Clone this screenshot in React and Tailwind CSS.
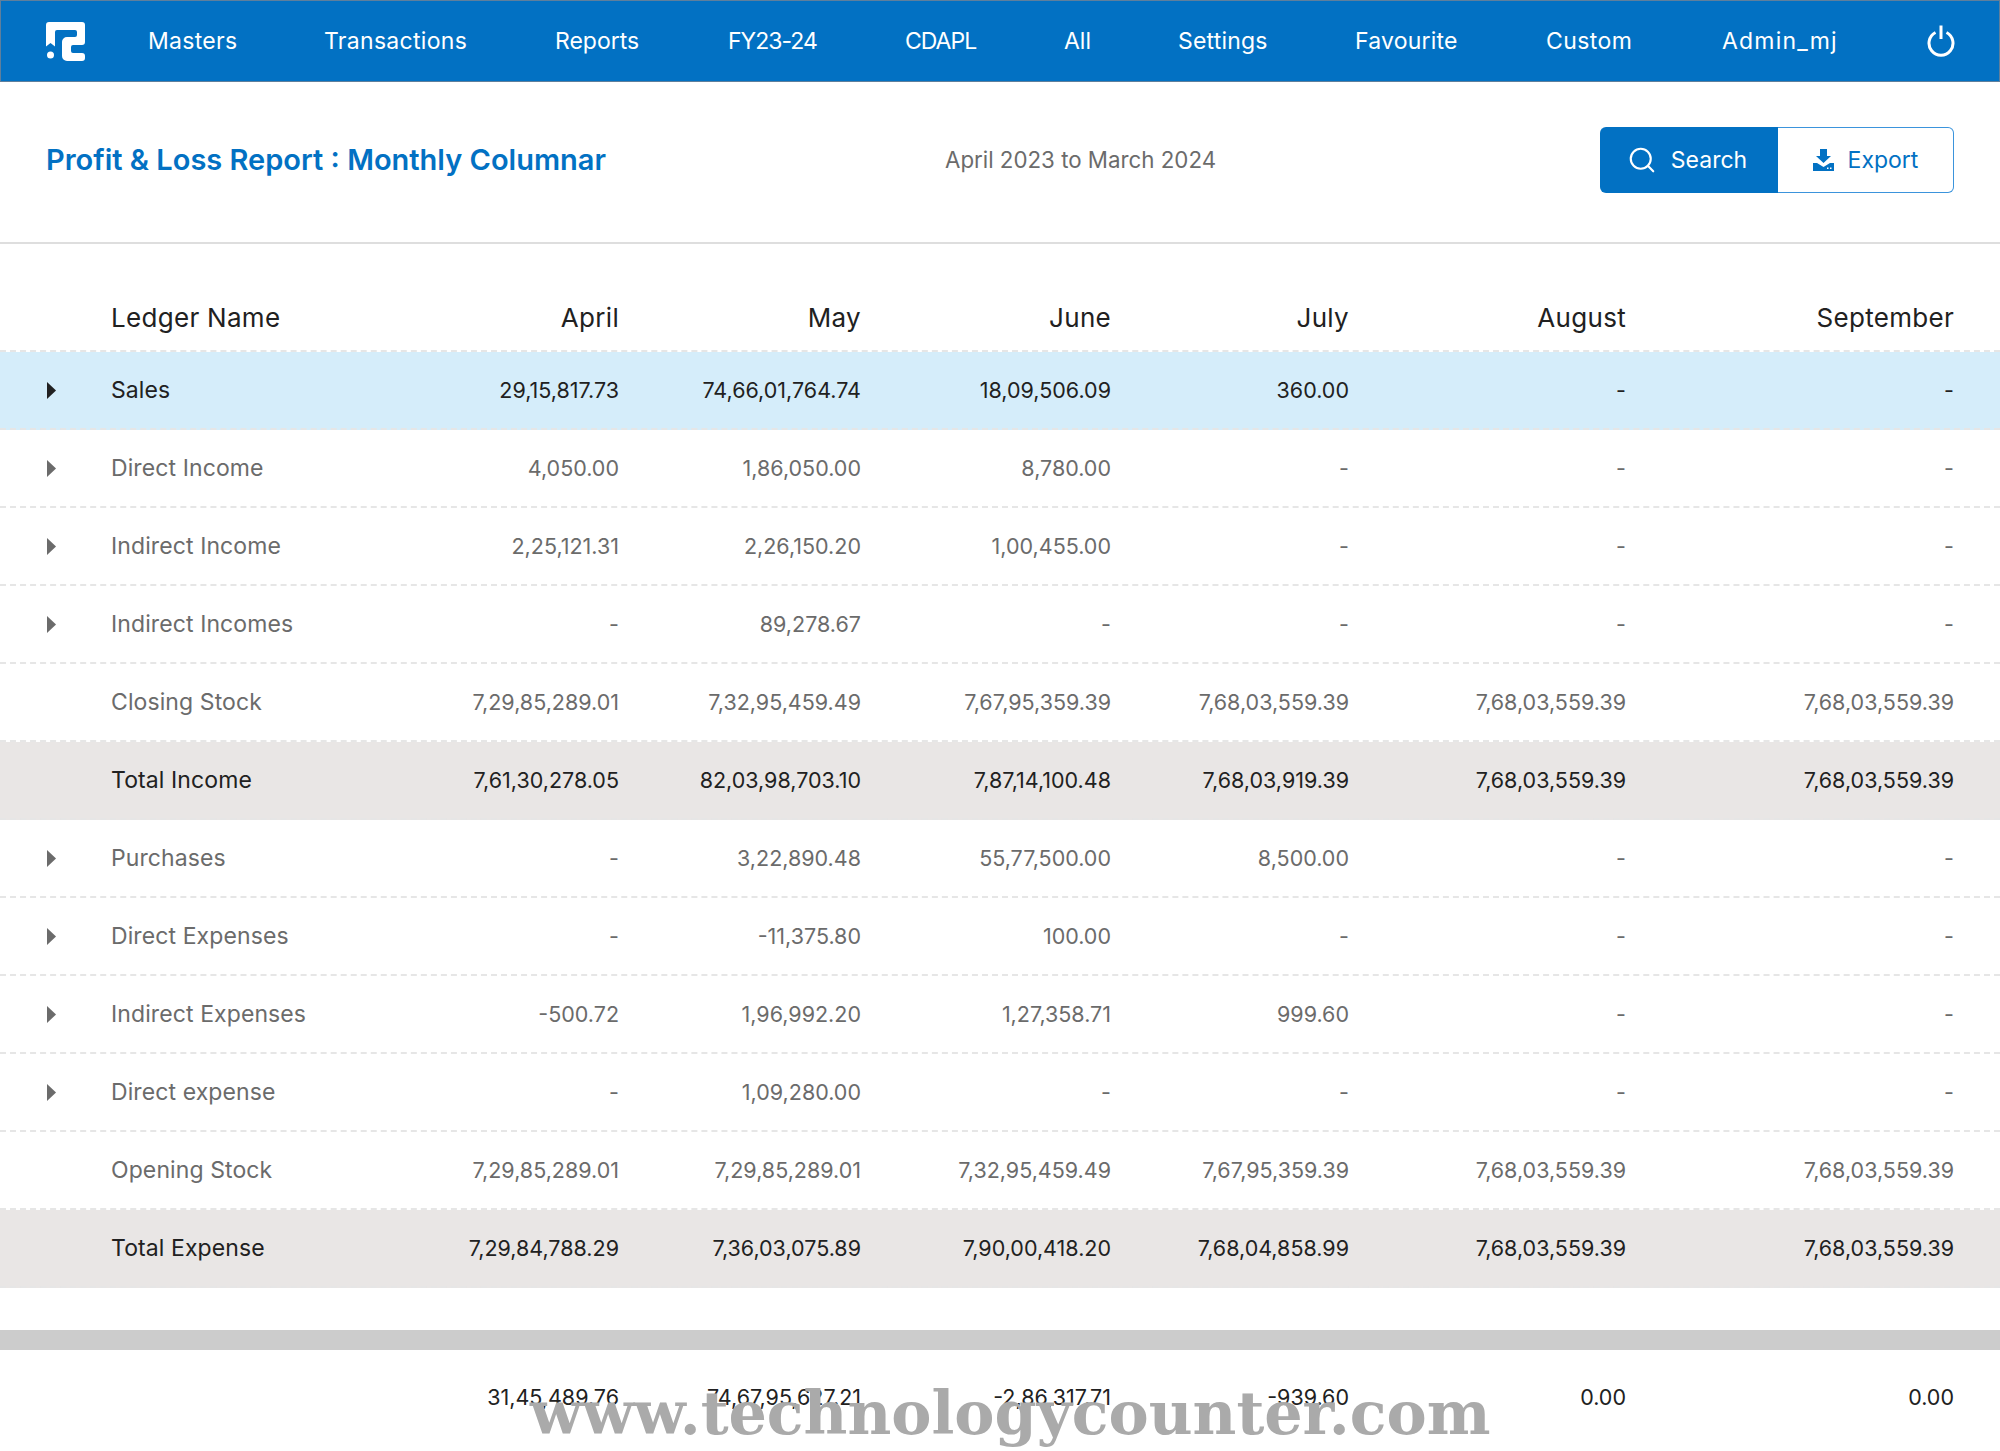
import React from "react";
import { Search } from "lucide-react";

const navItems = [
  { label: "Masters", tracking: "tracking-[0.3px]" },
  { label: "Transactions", tracking: "tracking-[0.3px]" },
  { label: "Reports", tracking: "tracking-[0px]" },
  { label: "FY23-24", tracking: "tracking-[-1px]" },
  { label: "CDAPL", tracking: "tracking-[-1px]" },
  { label: "All", tracking: "tracking-[0px]" },
  { label: "Settings", tracking: "tracking-[0.2px]" },
  { label: "Favourite", tracking: "tracking-[0.2px]" },
  { label: "Custom", tracking: "tracking-[0.4px]" },
  { label: "Admin_mj", tracking: "tracking-[1.2px]" },
];

const months = ["April", "May", "June", "July", "August", "September"];

const rows = [
  { name: "Sales", arrow: true, tone: "active", values: ["29,15,817.73", "74,66,01,764.74", "18,09,506.09", "360.00", "-", "-"] },
  { name: "Direct Income", arrow: true, values: ["4,050.00", "1,86,050.00", "8,780.00", "-", "-", "-"] },
  { name: "Indirect Income", arrow: true, values: ["2,25,121.31", "2,26,150.20", "1,00,455.00", "-", "-", "-"] },
  { name: "Indirect Incomes", arrow: true, values: ["-", "89,278.67", "-", "-", "-", "-"] },
  { name: "Closing Stock", values: ["7,29,85,289.01", "7,32,95,459.49", "7,67,95,359.39", "7,68,03,559.39", "7,68,03,559.39", "7,68,03,559.39"] },
  { name: "Total Income", tone: "total", values: ["7,61,30,278.05", "82,03,98,703.10", "7,87,14,100.48", "7,68,03,919.39", "7,68,03,559.39", "7,68,03,559.39"] },
  { name: "Purchases", arrow: true, values: ["-", "3,22,890.48", "55,77,500.00", "8,500.00", "-", "-"] },
  { name: "Direct Expenses", arrow: true, values: ["-", "-11,375.80", "100.00", "-", "-", "-"] },
  { name: "Indirect Expenses", arrow: true, values: ["-500.72", "1,96,992.20", "1,27,358.71", "999.60", "-", "-"] },
  { name: "Direct expense", arrow: true, values: ["-", "1,09,280.00", "-", "-", "-", "-"] },
  { name: "Opening Stock", values: ["7,29,85,289.01", "7,29,85,289.01", "7,32,95,459.49", "7,67,95,359.39", "7,68,03,559.39", "7,68,03,559.39"] },
  { name: "Total Expense", tone: "total", values: ["7,29,84,788.29", "7,36,03,075.89", "7,90,00,418.20", "7,68,04,858.99", "7,68,03,559.39", "7,68,03,559.39"] },
];

const netValues = ["31,45,489.76", "74,67,95,627.21", "-2,86,317.71", "-939.60", "0.00", "0.00"];

const gridCols = "grid grid-cols-[111px_300px_208px_242px_250px_238px_277px_328px] pr-[46px] items-center";

function Logo() {
  return (
    <svg width="39" height="39" viewBox="0 0 39 39" fill="#fff">
      <path d="M3 0H36a3 3 0 0 1 3 3V20a3 3 0 0 1-3 3H27a2 2 0 0 0-2 2v4a2 2 0 0 0 2 2H36a3 3 0 0 1 3 3v2a3 3 0 0 1-3 3H21a5 5 0 0 1-5-5V20a5 5 0 0 1 5-5H29a2 2 0 0 0 2-2V10a2 2 0 0 0-2-2H11a2 2 0 0 0-2 2V24.500L4.500 21 0 24.500V3a3 3 0 0 1 3-3z" />
      <circle cx="4.500" cy="33" r="3.500" />
    </svg>
  );
}

function PowerIcon() {
  return (
    <svg width="28" height="32" viewBox="0 0 28 32" fill="none" stroke="#fff" strokeWidth="3">
      <path d="M8.500 7.500A12 12 0 1 0 19.500 7.500" />
      <path d="M14 0.500V14" />
    </svg>
  );
}

function ExportIcon() {
  return (
    <svg width="21" height="22" viewBox="0 0 21 22" fill="currentColor">
      <path d="M7 0h7v7h4l-7.500 7L3 7h4z" />
      <path d="M0 14h4l6.500 4 6.500-4h4v8H0z" />
      <rect x="14" y="18.500" width="1.500" height="1.500" fill="#fff" />
      <rect x="17" y="18.500" width="1.500" height="1.500" fill="#fff" />
    </svg>
  );
}

function Row({ row }) {
  const tones = {
    active: "bg-[#d5edfa] text-[#212121]",
    total: "bg-[#e9e6e5] text-[#212121]",
  };
  return (
    <div
      className={`${gridCols} h-[78px] border-b-2 border-dashed border-[#e6e6e6] ${
        tones[row.tone] || "text-[#6b6b6b]"
      }`}
    >
      <div className="flex pl-[46px]">
        {row.arrow && (
          <svg width="11" height="17" viewBox="0 0 11 17" fill="currentColor">
            <path d="M1 0l9 8.500-9 8.500z" />
          </svg>
        )}
      </div>
      <div className="text-[23px] tracking-[0.1px]">{row.name}</div>
      {row.values.map((v, i) => (
        <div key={i} className="text-right">
          {v}
        </div>
      ))}
    </div>
  );
}

export default function App() {
  return (
    <div className="relative h-[1451px] overflow-hidden bg-white font-['Inter',sans-serif] text-[21.500px]">
      <header className="flex h-[82px] items-center border border-[#5f7f9c] bg-[#0271c3] text-white">
        <div className="pl-[45px] pr-[63px]">
          <Logo />
        </div>
        <nav className="grid grid-cols-[176px_231px_173px_177px_159px_114px_177px_191px_176px_auto] items-center text-[23px]">
          {navItems.map((item) => (
            <a key={item.label} href="#" className={item.tracking}>
              {item.label}
            </a>
          ))}
        </nav>
        <div className="ml-auto mr-[44px] flex">
          <PowerIcon />
        </div>
      </header>

      <section className="flex h-[162px] items-center border-b-2 border-[#dedede] px-[46px] pb-[4px]">
        <h1 className="w-[899px] text-[29px] font-semibold text-[#0271c3]">Profit &amp; Loss Report : Monthly Columnar</h1>
        <div className="flex-1 text-[22.300px] text-[#6b6b6b]">April 2023 to March 2024</div>
        <div className="flex h-[66px] text-[23px]">
          <button className="flex w-[178px] items-center justify-center gap-[14px] rounded-l-[6px] bg-[#0271c3] pr-[4px] text-white">
            <Search size={30} strokeWidth={1.7} />
            Search
          </button>
          <button className="flex w-[176px] items-center justify-center gap-[14px] rounded-r-[6px] border border-l-0 border-[#3b94dc] text-[#0271c3]">
            <ExportIcon />
            Export
          </button>
        </div>
      </section>

      <div className={`${gridCols} h-[108px] border-b-2 border-dashed border-[#e6e6e6] pt-[40px] text-[26px] tracking-[0.3px] text-[#212121]`}>
        <div />
        <div>Ledger Name</div>
        {months.map((m) => (
          <div key={m} className="text-right">
            {m}
          </div>
        ))}
      </div>

      {rows.map((row) => (
        <Row key={row.name} row={row} />
      ))}

      <div className="mt-[42px] h-[20px] bg-[#cccccc]" />

      <div className={`${gridCols} h-[94px] text-[#212121]`}>
        <div />
        <div />
        {netValues.map((v, i) => (
          <div key={i} className="text-right">
            {v}
          </div>
        ))}
      </div>

      <div className="absolute left-[530px] top-[1383px] whitespace-nowrap font-['DejaVu_Serif',serif] text-[60.300px] font-bold leading-none text-[#aaaaaa]">
        www.technologycounter.com
      </div>
    </div>
  );
}
